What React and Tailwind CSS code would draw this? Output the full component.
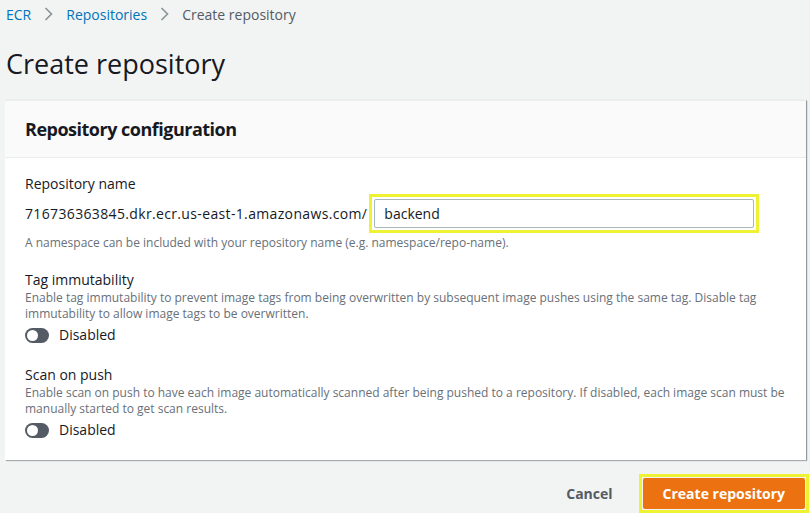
import { useState } from "react";

const Toggle = () => (
    <div className="flex items-center gap-[10px]">
        <div className="w-[24px] h-[15px] rounded-full bg-[#545b64] relative">
            <div className="absolute left-[2px] top-[2px] w-[11px] h-[11px] rounded-full bg-white"></div>
        </div>
        <span className="text-[14px] leading-[20px] text-[#16191f]">Disabled</span>
    </div>
);

const App = () => {
    const [name, setName] = useState("backend");

    return (
        <div className="w-[810px] h-[513px] overflow-hidden bg-[#f2f3f3] text-[#16191f] font-['Open_Sans',sans-serif]">
            {/* Breadcrumb */}
            <div className="flex items-center h-[28px] pl-[6px] text-[14px]">
                <span className="text-[#0073bb]">ECR</span>
                <svg className="mx-[13px]" width="9" height="14" viewBox="0 0 9 14">
                    <path d="M1.5 1l6 6-6 6" fill="none" stroke="#879596" strokeWidth="1.6" />
                </svg>
                <span className="text-[#0073bb]">Repositories</span>
                <svg className="mx-[13px]" width="9" height="14" viewBox="0 0 9 14">
                    <path d="M1.5 1l6 6-6 6" fill="none" stroke="#879596" strokeWidth="1.6" />
                </svg>
                <span className="text-[#545b64]">Create repository</span>
            </div>

            <h1 className="pl-[6px] pt-[18px] pb-[18px] text-[27px] leading-[36px] font-normal">Create repository</h1>

            {/* Panel */}
            <div className="ml-[5px] w-[801px] bg-white shadow-[1px_1px_1px_0_rgba(0,28,36,0.3),1px_0_1px_0_rgba(0,28,36,0.15)] border-t border-[#eaeded]">
                <div className="h-[57px] bg-[#fafafa] border-b border-[#eaeded] flex items-center px-[20px]">
                    <h2 className="text-[18px] font-bold tracking-[-0.5px]">Repository configuration</h2>
                </div>
                <div className="px-[20px] pt-[16px] pb-[20px]">
                    <div className="text-[14px] leading-[20px]">Repository name</div>
                    <div className="flex items-center">
                        <span className="text-[14px] tracking-[0.35px] pr-[2px]">716736363845.dkr.ecr.us-east-1.amazonaws.com/</span>
                        <div className="border-[3px] border-[#eef233] p-[2px]">
                            <input
                                value={name}
                                onChange={(e) => setName(e.target.value)}
                                className="block w-[380px] h-[29px] border border-[#aab7b8] rounded-[2px] px-[9px] text-[14px] text-[#16191f] outline-none"
                            />
                        </div>
                    </div>
                    <div className="text-[12px] leading-[16px] text-[#687078] mt-[2px]">
                        A namespace can be included with your repository name (e.g. namespace/repo-name).
                    </div>

                    <div className="mt-[19px] text-[14px] leading-[20px]">Tag immutability</div>
                    <div className="text-[12px] leading-[16px] text-[#687078]">
                        Enable tag immutability to prevent image tags from being overwritten by subsequent image pushes using the same tag. Disable tag immutability to allow image tags to be overwritten.
                    </div>
                    <div className="mt-[3px]"><Toggle /></div>

                    <div className="mt-[20px] text-[14px] leading-[20px]">Scan on push</div>
                    <div className="text-[12px] leading-[16px] text-[#687078]">
                        Enable scan on push to have each image automatically scanned after being pushed to a repository. If disabled, each image scan must be manually started to get scan results.
                    </div>
                    <div className="mt-[3px]"><Toggle /></div>
                </div>
            </div>

            {/* Footer actions */}
            <div className="flex justify-end items-center mt-[14px] pr-[1px]">
                <button className="text-[14px] font-bold text-[#545b64] px-[20px] mr-[6px]">Cancel</button>
                <div className="border-[3px] border-[#eef233] p-[1px]">
                    <button className="block h-[31px] px-[20px] bg-[#ec7211] text-white text-[14px] font-bold rounded-[2px]">Create repository</button>
                </div>
            </div>
        </div>
    );
};

export default App;
